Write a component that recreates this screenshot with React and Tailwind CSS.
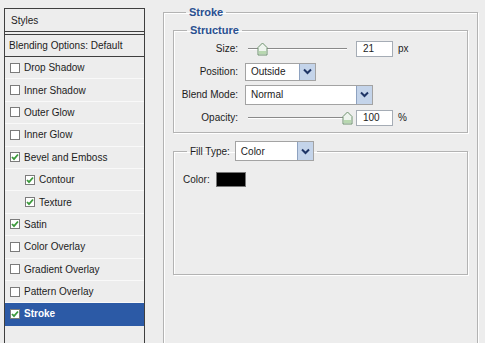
import React from "react";

const items = [
  { label: "Drop Shadow" },
  { label: "Inner Shadow" },
  { label: "Outer Glow" },
  { label: "Inner Glow" },
  { label: "Bevel and Emboss", checked: true },
  { label: "Contour", checked: true, indent: true },
  { label: "Texture", checked: true, indent: true },
  { label: "Satin", checked: true },
  { label: "Color Overlay" },
  { label: "Gradient Overlay" },
  { label: "Pattern Overlay" },
  { label: "Stroke", checked: true, selected: true },
];

function Check({ checked }) {
  return (
    <span className="w-[10px] h-[10px] border border-[#7b7b7b] bg-white flex items-center justify-center shrink-0">
      {checked && (
        <svg width="8" height="8" viewBox="0 0 8 8">
          <path d="M1 4 L3 6.2 L7 1.5" fill="none" stroke="#3c9a3c" strokeWidth="1.8" />
        </svg>
      )}
    </span>
  );
}

function Chevron() {
  return (
    <svg width="9" height="7" viewBox="0 0 9 7">
      <path d="M1 1.5 L4.5 5 L8 1.5" fill="none" stroke="#1f3566" strokeWidth="2" />
    </svg>
  );
}

function Select({ value, width, height }) {
  return (
    <div className={`flex bg-white border border-[#a3a3a3] ${width} ${height}`}>
      <span className="flex-1 pl-[5px] flex items-center">{value}</span>
      <span className="w-[16px] bg-[#c4d4ea] border-l border-[#8ea2c0] flex items-center justify-center">
        <Chevron />
      </span>
    </div>
  );
}

function Slider({ pos }) {
  return (
    <div className="relative w-[99px] h-[14px] flex items-center">
      <div className="w-full h-[2px] border-t border-[#8a8a8a] border-b border-b-white" />
      <svg
        className="absolute top-0"
        style={{ left: pos }}
        width="11"
        height="14"
        viewBox="0 0 11 14"
      >
        <path
          d="M1 13 V5.5 L5.5 1 L10 5.5 V13 Z"
          fill="#eef4ee"
          stroke="#6f936f"
          strokeWidth="1"
        />
        <rect x="2" y="9" width="7" height="3" fill="#b8d8b0" />
      </svg>
    </div>
  );
}

function NumBox({ value, unit }) {
  return (
    <div className="flex items-center ml-[9px]">
      <span className="w-[37px] h-[16px] bg-white border border-[#a5acb5] pl-[6px] flex items-center">
        {value}
      </span>
      <span className="ml-[5px]">{unit}</span>
    </div>
  );
}

function Row({ label, children }) {
  return (
    <div className="h-[23px] flex items-center">
      <span className="w-[66px] text-right pr-[2px] shrink-0">{label}</span>
      <div className="ml-[5px] flex items-center">{children}</div>
    </div>
  );
}

export default function App() {
  return (
    <div className="w-[485px] h-[343px] bg-[#ededed] flex overflow-hidden text-[10px] text-[#1c1c1c] font-['Liberation_Sans',Arial,sans-serif]">
      {/* Styles list */}
      <div className="ml-[4px] mt-[8px] w-[141px] border border-b-0 border-[#3f3f3f] flex flex-col shrink-0">
        <div className="h-[23px] pl-[6px] flex items-center border-b border-[#3f3f3f]">Styles</div>
        <div className="h-[2px]" />
        <div className="h-[23px] pl-[4px] flex items-center border-t border-b border-[#3f3f3f]">
          Blending Options: Default
        </div>
        {items.map((it, i) => (
          <div
            key={i}
            className={`h-[22.4px] flex items-center gap-[4px] border-b ${
              it.selected
                ? "bg-[#2c5aa6] text-white font-bold border-[#2c5aa6]"
                : "border-[#f9f9f9]"
            } ${it.indent ? "pl-[20px]" : "pl-[5px]"}`}
          >
            <Check checked={it.checked} />
            <span>{it.label}</span>
          </div>
        ))}
      </div>

      {/* Stroke options */}
      <div className="flex-1 pt-[6px]">
        <fieldset className="ml-[18px] w-[315px] h-[360px] border border-[#b3b3b3] shadow-[inset_1px_1px_0_#fff,1px_1px_0_#fff] px-[9px] pt-[5px]">
          <legend className="ml-[13px] px-[3px] text-[11px] leading-[13px] font-bold text-[#2a5091]">
            Stroke
          </legend>

          <fieldset className="border border-[#b3b3b3] shadow-[inset_1px_1px_0_#fff,1px_1px_0_#fff] pb-[3px]">
            <legend className="ml-[13px] px-[3px] text-[11px] leading-[13px] font-bold text-[#2a5091]">
              Structure
            </legend>
            <Row label="Size:">
              <div className="ml-[3px]">
                <Slider pos={9} />
              </div>
              <NumBox value="21" unit="px" />
            </Row>
            <Row label="Position:">
              <Select value="Outside" width="w-[71px]" height="h-[18px]" />
            </Row>
            <Row label="Blend Mode:">
              <Select value="Normal" width="w-[128px]" height="h-[20px]" />
            </Row>
            <Row label="Opacity:">
              <div className="ml-[3px]">
                <Slider pos={94} />
              </div>
              <NumBox value="100" unit="%" />
            </Row>
          </fieldset>

          <fieldset className="mt-[8px] border border-[#b3b3b3] shadow-[inset_1px_1px_0_#fff,1px_1px_0_#fff]">
            <legend className="ml-[13px] px-[3px] flex items-center gap-[5px]">
              <span>Fill Type:</span>
              <Select value="Color" width="w-[79px]" height="h-[20px]" />
            </legend>
            <div className="h-[113px] pt-[11px] pl-[9px]">
              <div className="flex items-center h-[15px]">
                <span>Color:</span>
                <span className="ml-[6px] w-[30px] h-[15px] bg-black border border-[#777]" />
              </div>
            </div>
          </fieldset>
        </fieldset>
      </div>
    </div>
  );
}
